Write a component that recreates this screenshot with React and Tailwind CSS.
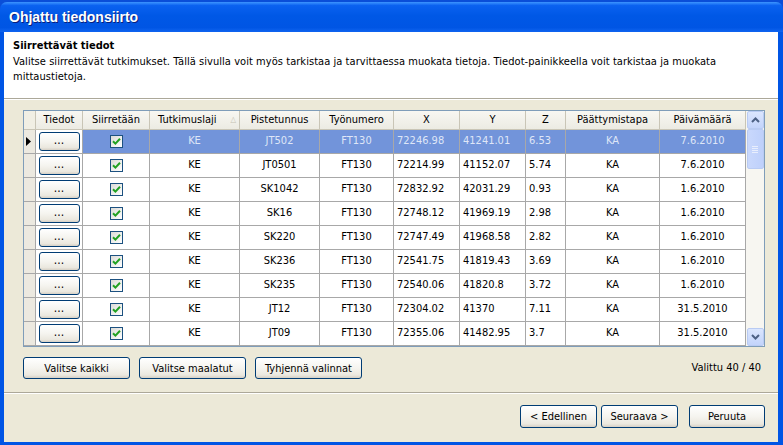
const rows = [
  ["KE", "JT502", "FT130", "72246.98", "41241.01", "6.53", "KA", "7.6.2010"],
  ["KE", "JT0501", "FT130", "72214.99", "41152.07", "5.74", "KA", "7.6.2010"],
  ["KE", "SK1042", "FT130", "72832.92", "42031.29", "0.93", "KA", "1.6.2010"],
  ["KE", "SK16", "FT130", "72748.12", "41969.19", "2.98", "KA", "1.6.2010"],
  ["KE", "SK220", "FT130", "72747.49", "41968.58", "2.82", "KA", "1.6.2010"],
  ["KE", "SK236", "FT130", "72541.75", "41819.43", "3.69", "KA", "1.6.2010"],
  ["KE", "SK235", "FT130", "72540.06", "41820.8", "3.72", "KA", "1.6.2010"],
  ["KE", "JT12", "FT130", "72304.02", "41370", "7.11", "KA", "31.5.2010"],
  ["KE", "JT09", "FT130", "72355.06", "41482.95", "3.7", "KA", "31.5.2010"],
];

const headers = ["Tiedot", "Siirretään", "Tutkimuslaji", "Pistetunnus", "Työnumero", "X", "Y", "Z", "Päättymistapa", "Päivämäärä"];

// numeric columns are left aligned, the rest centered
const leftCols = [3, 4, 5];

const gridCols = "grid grid-cols-[12px_47px_67px_90px_80px_74px_66px_66px_40px_94px_86px]";

const XpButton = ({ children, className = "" }) => (
  <button
    className={`flex items-center justify-center rounded-[3px] border border-[#003c74] bg-[linear-gradient(to_bottom,#ffffff_0%,#f5f4ef_50%,#ebe8df_85%,#d6d0c5_100%)] text-[11px] leading-none text-black ${className}`}
  >
    {children}
  </button>
);

const CheckBox = () => (
  <div className="flex h-[13px] w-[13px] items-center justify-center border border-[#1c5180] bg-[linear-gradient(135deg,#dcdcd7,#ffffff)]">
    <svg width="9" height="9" viewBox="0 0 9 9">
      <path d="M1 4.2 L3.4 6.6 L8 1.8" fill="none" stroke="#21a121" strokeWidth="2" />
    </svg>
  </div>
);

const ScrollArrow = ({ up }) => (
  <div className="flex h-[18px] w-[17px] items-center justify-center rounded-[2px] border border-[#b9cbf3] bg-[linear-gradient(to_bottom,#dbe6fe,#c3d4fb)]">
    <svg width="9" height="6" viewBox="0 0 9 6">
      <path d={up ? "M1 5 L4.5 1.5 L8 5" : "M1 1 L4.5 4.5 L8 1"} fill="none" stroke="#4d6185" strokeWidth="2" />
    </svg>
  </div>
);

export default function App() {
  return (
    <div className="flex h-[445px] w-[783px] flex-col bg-[#0a4ed8] pt-[2px] font-['DejaVu_Sans_Condensed','Liberation_Sans',sans-serif] text-[11px] text-black">
      {/* title bar */}
      <div className="flex h-[30px] items-center rounded-t-[7px] bg-[linear-gradient(to_bottom,#3d95ff_0%,#0a61f0_12%,#0058e6_45%,#0055e4_85%,#1064f0_100%)] pl-[9px]">
        <span className="font-['Liberation_Sans',sans-serif] text-[14px] font-bold text-white [text-shadow:1px_1px_#0a1e7a]">
          Ohjattu tiedonsiirto
        </span>
      </div>

      <div className="flex flex-1 bg-[#0055e5] pb-[3px] pl-[4px] pr-[5px]">
        <div className="flex flex-1 flex-col bg-[#ece9d8]">
          {/* page header */}
          <div className="h-[66px] bg-white px-[9px] pt-[6px] leading-[15px]">
            <div className="font-bold">Siirrettävät tiedot</div>
            <div className="mt-[1px] tracking-[0.05px]">
              Valitse siirrettävät tutkimukset. Tällä sivulla voit myös tarkistaa ja tarvittaessa muokata tietoja. Tiedot-painikkeella voit tarkistaa ja muokata mittaustietoja.
            </div>
          </div>
          <div className="h-[1px] bg-[#aca899]" />
          <div className="h-[1px] bg-white" />

          {/* grid */}
          <div className="ml-[19px] mr-[13px] mt-[10px] flex border border-[#7f9db9] bg-white">
            <div className="flex-1">
              <div className={`${gridCols} h-[19px] bg-[#f1efe4]`}>
                <div className="border-b border-r border-[#c9c5b6]" />
                {headers.map((h) => (
                  <div
                    key={h}
                    className={`flex items-center border-b border-r border-[#c9c5b6] bg-[linear-gradient(to_bottom,#f8f7f2,#ecebe3)] ${
                      h === "Tutkimuslaji" ? "justify-end gap-[14px] pr-[3px]" : "justify-center"
                    }`}
                  >
                    <span>{h}</span>
                    {h === "Tutkimuslaji" && <span className="text-[8px] text-[#c6c3b5]">△</span>}
                  </div>
                ))}
              </div>
              {rows.map((r, i) => {
                const sel = i === 0;
                return (
                  <div key={i} className={`${gridCols} h-[24px]`}>
                    <div className="flex items-center border-b border-r border-[#a8a8a8] bg-[#ece9e0] pl-[2px]">
                      {sel && (
                        <svg width="5" height="9" viewBox="0 0 5 9">
                          <path d="M0 0 L5 4.5 L0 9 Z" fill="#000" />
                        </svg>
                      )}
                    </div>
                    <div className="flex items-center justify-center border-b border-r border-[#a8a8a8] bg-white">
                      <XpButton className="h-[19px] w-[41px] pb-[4px] text-[12px]">...</XpButton>
                    </div>
                    <div
                      className={`flex items-center justify-center border-b border-r border-[#a8a8a8] ${sel ? "bg-[#7294da]" : "bg-white"}`}
                    >
                      <CheckBox />
                    </div>
                    {r.map((c, j) => (
                      <div
                        key={j}
                        className={`flex items-center border-b border-r border-[#a8a8a8] ${
                          leftCols.includes(j) ? "justify-start pl-[3px]" : "justify-center"
                        } ${sel ? "bg-[#7294da] text-[#dfe6f7]" : "bg-white"}`}
                      >
                        {c}
                      </div>
                    ))}
                  </div>
                );
              })}
            </div>
            {/* scrollbar */}
            <div className="flex w-[18px] flex-col items-center bg-[#f7f6f1]">
              <ScrollArrow up />
              <div className="flex h-[40px] w-[17px] items-center justify-center rounded-[2px] border border-[#b9cbf3] bg-[linear-gradient(to_right,#c9d8fc,#bed0fb)]">
                <div className="flex flex-col gap-[1px]">
                  <div className="h-[1px] w-[6px] bg-[#e8eefd]" />
                  <div className="h-[1px] w-[6px] bg-[#e8eefd]" />
                  <div className="h-[1px] w-[6px] bg-[#e8eefd]" />
                  <div className="h-[1px] w-[6px] bg-[#e8eefd]" />
                </div>
              </div>
              <div className="flex-1" />
              <ScrollArrow />
            </div>
          </div>

          {/* selection buttons */}
          <div className="ml-[19px] mr-[17px] mt-[10px] flex items-center">
            <div className="flex gap-[9px]">
              <XpButton className="h-[22px] w-[107px]">Valitse kaikki</XpButton>
              <XpButton className="h-[22px] w-[107px]">Valitse maalatut</XpButton>
              <XpButton className="h-[22px] w-[107px]">Tyhjennä valinnat</XpButton>
            </div>
            <div className="ml-auto">Valittu 40 / 40</div>
          </div>

          <div className="mt-[13px] h-[1px] bg-[#aca899]" />
          <div className="h-[1px] bg-white" />

          {/* wizard buttons */}
          <div className="mr-[13px] mt-[11px] flex justify-end">
            <XpButton className="h-[23px] w-[77px]">&lt; Edellinen</XpButton>
            <XpButton className="ml-[4px] h-[23px] w-[77px]">Seuraava &gt;</XpButton>
            <XpButton className="ml-[11px] h-[23px] w-[76px]">Peruuta</XpButton>
          </div>
        </div>
      </div>
    </div>
  );
}
